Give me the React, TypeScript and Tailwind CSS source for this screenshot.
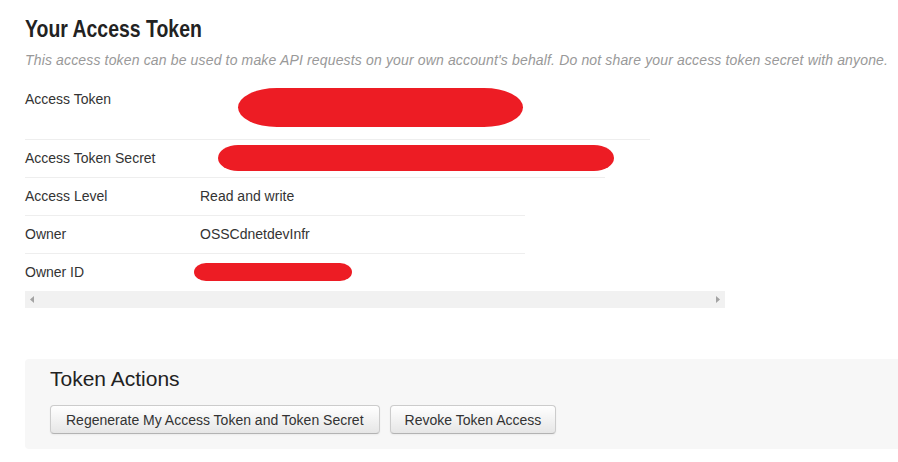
import React from "react";

const Redacted = ({ className }: { className: string }) => (
  <div className={`bg-[#ed1c24] ${className}`} />
);

export default function App() {
  return (
    <div className="min-h-screen bg-white pl-[25px] pt-[15px] font-['Liberation_Sans',Arial,sans-serif] text-[#333]">
      {/* header */}
      <h1 className="inline-block origin-left scale-x-[0.81] text-[24px] leading-[28px] font-bold text-[#222]">
        Your Access Token
      </h1>
      <p className="mt-[7px] text-[14px] leading-[18px] tracking-[0.15px] italic text-[#999]">
        This access token can be used to make API requests on your own account's behalf. Do not share your access
        token secret with anyone.
      </p>

      {/* details */}
      <div className="mt-[12px] w-[700px] text-[14px] leading-5">
        <div className="flex h-[58px]">
          <div className="w-[175px] shrink-0 pt-2">Access Token</div>
          <Redacted className="ml-[38px] mt-[7px] h-[39px] w-[285px] rounded-[40px/20px]" />
        </div>
        <div className="flex h-[38px] w-[625px] border-t border-[#eee]">
          <div className="w-[175px] shrink-0 pt-2">Access Token Secret</div>
          <Redacted className="ml-[18px] mt-[5px] h-[26px] w-[396px] rounded-[20px/13px]" />
        </div>
        <div className="flex h-[38px] w-[580px] border-t border-[#eee]">
          <div className="w-[175px] shrink-0 pt-2">Access Level</div>
          <div className="pt-2">Read and write</div>
        </div>
        <div className="flex h-[38px] w-[500px] border-t border-[#eee]">
          <div className="w-[175px] shrink-0 pt-2">Owner</div>
          <div className="pt-2">OSSCdnetdevInfr</div>
        </div>
        <div className="flex h-[38px] w-[500px] border-t border-[#eee]">
          <div className="w-[169px] shrink-0 pt-2">Owner ID</div>
          <Redacted className="mt-[9px] h-[18px] w-[158px] rounded-[12px/9px]" />
        </div>

        {/* horizontal scrollbar */}
        <div className="flex h-[17px] items-center justify-between bg-[#f1f1f1] px-[5px]">
          <svg width="5" height="7" viewBox="0 0 5 7">
            <path d="M4 0 L0 3.5 L4 7 Z" fill="#a3a3a3" />
          </svg>
          <svg width="5" height="7" viewBox="0 0 5 7">
            <path d="M1 0 L5 3.5 L1 7 Z" fill="#a3a3a3" />
          </svg>
        </div>
      </div>

      {/* actions */}
      <div className="mt-[51px] rounded-l-[4px] bg-[#f7f7f7] pb-[15px] pl-[25px] pt-[9px]">
        <h2 className="text-[21px] leading-[22px] text-[#222]">Token Actions</h2>
        <div className="mt-[15px] flex gap-[10px]">
          <button className="h-[29px] rounded-[4px] border border-[#ccc] border-b-[#b3b3b3] bg-gradient-to-b from-white to-[#e6e6e6] px-[15px] pt-[2px] text-[14px] text-[#333] shadow-[0_1px_2px_rgba(0,0,0,0.05)]">
            Regenerate My Access Token and Token Secret
          </button>
          <button className="h-[29px] rounded-[4px] border border-[#ccc] border-b-[#b3b3b3] bg-gradient-to-b from-white to-[#e6e6e6] px-[14px] pt-[2px] text-[14px] text-[#333] shadow-[0_1px_2px_rgba(0,0,0,0.05)]">
            Revoke Token Access
          </button>
        </div>
      </div>
    </div>
  );
}
